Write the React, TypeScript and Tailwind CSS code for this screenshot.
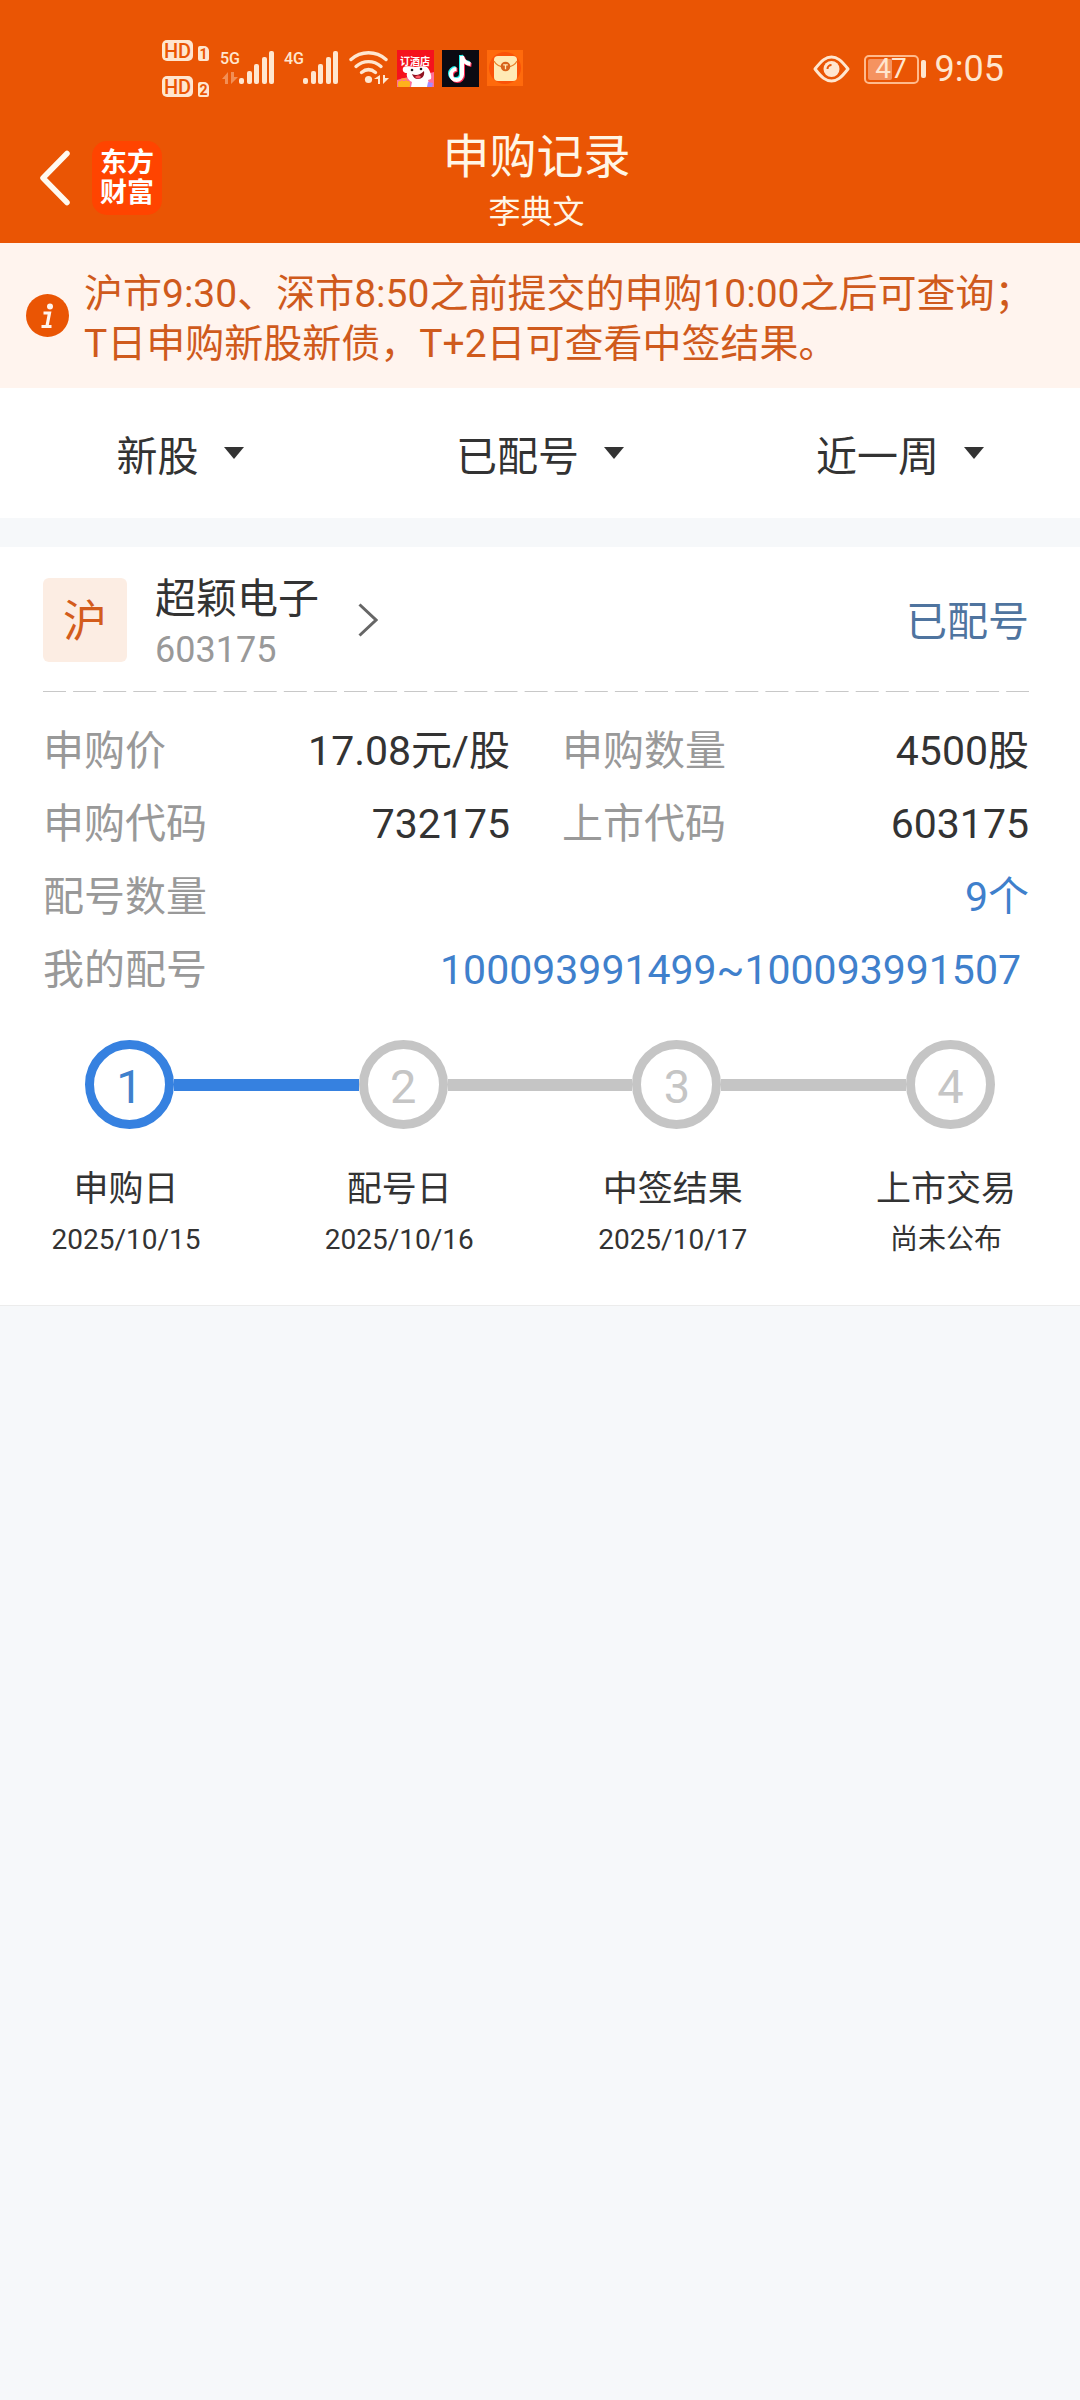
import clsx from 'clsx';
import { useState } from 'react';

type Field = {
  label: string;
  value: string;
};

const filters = [
  { id: 'kind', name: '品种', value: '新股' },
  { id: 'status', name: '状态', value: '已配号' },
  { id: 'range', name: '时间', value: '近一周' },
];

const fields: Field[] = [
  { label: '申购价', value: '17.08元/股' },
  { label: '申购数量', value: '4500股' },
  { label: '申购代码', value: '732175' },
  { label: '上市代码', value: '603175' },
];

const steps = [
  { title: '申购日', date: '2025/10/15', done: true },
  { title: '配号日', date: '2025/10/16', done: false },
  { title: '中签结果', date: '2025/10/17', done: false },
  { title: '上市交易', date: '尚未公布', done: false },
];

function SimBadge({ slot }: { slot: string }) {
  return (
    <div className="flex items-end gap-[5px]">
      <span className="flex h-[21px] w-[31px] items-center justify-center rounded-[5px] bg-[#ffe6cf] text-[20px] leading-none font-medium text-[#ea5504]">
        HD
      </span>
      <span className="flex h-[15px] w-[11px] items-center justify-center rounded-[2px] rounded-tr-[5px] bg-[#ffe6cf] text-[14px] leading-none font-bold text-[#ea5504]">
        {slot}
      </span>
    </div>
  );
}

function Signal({ label, data }: { label: string; data?: boolean }) {
  return (
    <div className="flex items-start">
      <div className="flex w-[18px] flex-col items-center gap-[5px]">
        <span className="text-[16px] leading-[16px] font-medium">{label}</span>
        {data && (
          <svg className="h-[12px] w-[16px] opacity-40" viewBox="0 0 16 12" fill="currentColor">
            <path d="M6 0v12H3V7H0z" />
            <path d="M9 0v12l7-7h-4V0z" />
          </svg>
        )}
      </div>
      <svg className="h-[33px] w-[36px]" viewBox="0 0 36 33" fill="currentColor">
        <rect x="0" y="27" width="5" height="6" rx="2" />
        <rect x="8" y="20" width="5" height="13" rx="2" />
        <rect x="15" y="13" width="5" height="20" rx="2" />
        <rect x="23" y="6" width="5" height="27" rx="2" />
        <rect x="30" y="0" width="5" height="33" rx="2" />
      </svg>
    </div>
  );
}

function WifiIcon() {
  return (
    <svg className="h-[33px] w-[40px]" viewBox="0 0 40 33" fill="none">
      <g stroke="currentColor" strokeWidth="3.400" strokeLinecap="round">
        <path d="M2 8.500C12-.500 27-.500 37 8.500" />
        <path d="M7 15.500c7.500-6.500 17.500-6.500 25 0" />
        <path d="M12.500 21.500c4.500-3.700 9.500-3.700 14 0" />
      </g>
      <circle cx="19.500" cy="28.500" r="3.600" fill="currentColor" />
      <path d="M31 24v9h-2v-5h-4zM34 24v9l6-6h-4v-3z" fill="currentColor" />
    </svg>
  );
}

function HotelAppIcon() {
  return (
    <div className="relative h-[37px] w-[37px] overflow-hidden bg-[#f5121d]">
      <svg className="h-full w-full" viewBox="0 0 37 37">
        <path d="M0 30c10-4 25-4 37-8v15H0z" fill="#ff6f9a" />
        <path d="M6 18c2-3 8-1 12-1 5 0 10-2 13 1 2 3 4 8 3 11l-3 1 2 7H14l1-5c-4-2-6-6-5-9-3 0-5-2-4-5z" fill="#fff" />
        <circle cx="15" cy="20" r="1.300" fill="#222" />
        <circle cx="24" cy="19" r="1.300" fill="#222" />
        <path d="M15 24c4 2 8 1 12-3 1 5-2 8-6 8-3 0-5-2-6-5z" fill="#8e1320" />
        <path d="M18 27c2-2 5-2 6 0-2 2-4 2-6 0z" fill="#ff5a67" />
        <rect x="1" y="31" width="12" height="6" rx="1.500" fill="#ffb21c" />
        <path d="M5 31v-2h4v2" stroke="#ffb21c" strokeWidth="1.200" fill="none" />
        <path d="M31 32l5 1-1 4h-5z" fill="#a58bff" />
      </svg>
      <span className="absolute top-[6px] left-[3px] text-[10px] leading-[11px] font-bold text-white">
        订酒店
      </span>
    </div>
  );
}

function NoteIcon() {
  const note = 'M20 6v18.500a5.500 5.500 0 1 1-5.500-5.500M20 6c.500 4.500 4 7.500 8.500 8';
  return (
    <svg className="h-[37px] w-[37px] bg-[#0b0a12]" viewBox="0 0 37 37" fill="none" strokeWidth="4">
      <g transform="translate(-1 -1)" stroke="#25f4ee">
        <path d={note} />
      </g>
      <g transform="translate(1 1)" stroke="#fe2c55">
        <path d={note} />
      </g>
      <path d={note} stroke="#fff" />
    </svg>
  );
}

function EnvelopeIcon() {
  return (
    <svg className="h-[36px] w-[36px]" viewBox="0 0 36 36">
      <rect width="36" height="36" fill="#ff6a0c" />
      <circle cx="18" cy="18" r="16" fill="#fa5208" />
      <rect x="7" y="6" width="23" height="25" rx="4" fill="#ffeab5" />
      <path d="M7 11c2 4 6 6 11.500 6S28 15 30 11" stroke="#e9822b" strokeWidth="1.200" fill="none" />
      <circle cx="18.500" cy="16.500" r="4.800" fill="#d8641c" />
      <path d="M16.200 14.800h4.600M18.500 14.800v4.400" stroke="#ffeab5" strokeWidth="1.300" />
    </svg>
  );
}

function EyeIcon() {
  return (
    <svg className="h-[28px] w-[37px]" viewBox="0 0 37 28" fill="none">
      <path
        d="M2 14C9 5 13 2 18.500 2S28 5 35 14c-7 9-11 12-16.500 12S9 23 2 14z"
        stroke="currentColor"
        strokeWidth="3"
        strokeLinejoin="round"
      />
      <circle cx="18.500" cy="14" r="8" fill="currentColor" />
      <path d="M14.500 14a4 4 0 0 1 4-4" stroke="#ea5504" strokeWidth="2" />
    </svg>
  );
}

function Battery({ level }: { level: number }) {
  return (
    <div className="flex items-center gap-[2px]">
      <div className="relative flex h-[29px] w-[55px] items-center justify-center rounded-[5px] border-2 border-[#ffba8c] p-[2px]">
        <div
          className="absolute top-[2px] bottom-[2px] left-[2px] rounded-[2px] bg-[#f59360]"
          style={{ width: `${level}%` }}
        />
        <span className="relative text-[28px] leading-none">{level}</span>
      </div>
      <div className="h-[18px] w-[5px] rounded-[2px] bg-[#ffe6cf]" />
    </div>
  );
}

function StatusBar() {
  return (
    <div className="flex h-[124px] items-start justify-between pt-10 pr-[76px] pl-[162px] text-[#ffe6cf]">
      <div className="flex items-start">
        <div className="flex flex-col gap-[15px]">
          <SimBadge slot="1" />
          <SimBadge slot="2" />
        </div>
        <div className="ml-3 flex gap-[10px] pt-[11px]">
          <Signal label="5G" data />
          <Signal label="4G" />
          <WifiIcon />
        </div>
        <div className="ml-2 flex gap-2 pt-[10px]">
          <HotelAppIcon />
          <NoteIcon />
          <EnvelopeIcon />
        </div>
      </div>
      <div className="flex items-center pt-2">
        <EyeIcon />
        <div className="ml-[14px]">
          <Battery level={47} />
        </div>
        <span className="ml-[9px] text-[36px] leading-[42px]">9:05</span>
      </div>
    </div>
  );
}

function Header() {
  return (
    <header className="bg-[#ea5504]">
      <StatusBar />
      <div className="grid h-[119px] grid-cols-[1fr_auto_1fr] items-start">
        <div className="flex items-center gap-[22px] pt-[17px] pl-[38px]">
          <button type="button" aria-label="返回">
            <svg className="h-[56px] w-[32px]" viewBox="0 0 32 56" fill="none">
              <path d="M29 3.500L5 28l24 24.500" stroke="#fffaf0" strokeWidth="5.500" strokeLinecap="round" strokeLinejoin="round" />
            </svg>
          </button>
          <div className="flex h-[74px] w-[70px] items-center justify-center rounded-[15px] bg-[#ff4400] text-center text-[27px] leading-[30px] font-bold text-white">
            东方
            <br />
            财富
          </div>
        </div>
        <div className="pr-[7px] text-center text-[#fff6e6]">
          <h1 className="text-[47px] leading-[66px]">申购记录</h1>
          <p className="text-[32px] leading-[44px]">李典文</p>
        </div>
      </div>
    </header>
  );
}

function Notice() {
  return (
    <div className="flex items-center gap-[15px] bg-[#fff4ee] px-[26px] pt-[18px] pb-[19px]">
      <svg className="h-[43px] w-[43px] shrink-0" viewBox="0 0 43 43">
        <circle cx="21.500" cy="21.500" r="21.500" fill="#ea5504" />
        <circle cx="24" cy="12.500" r="3" fill="#fff4ee" />
        <path d="M17.500 19h6l-2.500 13M15.500 32.500h10" stroke="#fff4ee" strokeWidth="3.200" fill="none" />
      </svg>
      <p className="pt-2 text-[39px] leading-[50px] text-[#cf5a1c]">
        沪市9:30、深市8:50之前提交的申购10:00之后可查询；
        <br />
        T日申购新股新债，T+2日可查看中签结果。
      </p>
    </div>
  );
}

function Filters() {
  return (
    <div className="grid h-[130px] grid-cols-3 items-center justify-items-center bg-white">
      {filters.map((filter) => (
        <div key={filter.id} className="relative flex items-center">
          <select
            id={filter.id}
            aria-label={filter.name}
            className="h-[76px] appearance-none pt-2 pr-[45px] text-[41px] leading-[68px] outline-none"
          >
            <option>{filter.value}</option>
          </select>
          <svg className="pointer-events-none absolute right-0 h-[12px] w-[20px]" viewBox="0 0 20 12">
            <path d="M0 0h20L10 12z" fill="#333" />
          </svg>
        </div>
      ))}
    </div>
  );
}

function FieldRow({ label, value }: Field) {
  return (
    <div className="flex justify-between">
      <dt className="text-[#999]">{label}</dt>
      <dd>{value}</dd>
    </div>
  );
}

function Stepper() {
  return (
    <div className="pt-[33px]">
      <div className="flex items-center pr-[34px] pl-[42px]">
        {steps.map((step, i) => (
          <div key={step.title} className={clsx('flex items-center', i > 0 && 'flex-1')}>
            {i > 0 && (
              <div className={clsx('h-3 flex-1', steps[i - 1].done ? 'bg-[#3681e0]' : 'bg-[#c5c5c5]')} />
            )}
            <div
              className={clsx(
                'flex h-[89px] w-[89px] items-center justify-center rounded-full border-[9px] pt-1 text-[47px] leading-none',
                step.done ? 'border-[#3681e0] text-[#3f80cc]' : 'border-[#c5c5c5] text-[#c5c5c5]'
              )}
            >
              {i + 1}
            </div>
          </div>
        ))}
      </div>
      <ol className="flex justify-between pt-[34px]">
        {steps.map((step) => (
          <li key={step.title} className="w-[166px] text-center">
            <p className="text-[35px] leading-[54px]">{step.title}</p>
            <p className="text-[28px] leading-[46px]">{step.date}</p>
          </li>
        ))}
      </ol>
    </div>
  );
}

function RecordCard() {
  const [numbers] = useState('100093991499~100093991507');

  return (
    <section className="border-b border-[#ececec] bg-white pt-[29px] pr-[51px] pb-[42px] pl-[43px]">
      <div className="flex items-center justify-between">
        <a href="#603175" className="flex items-center">
          <span className="flex h-[84px] w-[84px] items-center justify-center rounded-md bg-[#fcede3] pt-1 text-[44px] leading-none text-[#d35c1c]">
            沪
          </span>
          <span className="ml-7 flex h-[88px] flex-col justify-between pt-[2px]">
            <span className="text-[41px] leading-[42px]">超颖电子</span>
            <span className="text-[36px] leading-[28px] text-[#999]">603175</span>
          </span>
          <svg className="ml-[39px] h-[34px] w-[20px]" viewBox="0 0 20 34" fill="none">
            <path d="M1.500 1.500L18 17 1.500 32.500" stroke="#666" strokeWidth="3" />
          </svg>
        </a>
        <span className="pt-1 text-[41px] leading-[60px] text-[#4f749f]">已配号</span>
      </div>

      <svg className="mt-[27px] block h-px w-full">
        <line x1="0" x2="100%" y1="0.5" y2="0.5" stroke="#c8c8c8" strokeDasharray="23 7.1" />
      </svg>

      <dl className="pt-[23px] text-[41px] leading-[73px]">
        <div className="grid grid-cols-2 gap-x-[52px]">
          {fields.map((field) => (
            <FieldRow key={field.label} {...field} />
          ))}
        </div>
        <div className="flex justify-between">
          <dt className="text-[#999]">配号数量</dt>
          <dd className="text-[#3f80cc]">9个</dd>
        </div>
        <div className="flex justify-between">
          <dt className="text-[#999]">我的配号</dt>
          <dd className="pr-2 text-[#3f80cc]">{numbers}</dd>
        </div>
      </dl>

      <Stepper />
    </section>
  );
}

export default function App() {
  return (
    <div className="min-h-screen bg-[#f6f8fa] font-[Roboto,'Noto_Sans_CJK_SC',sans-serif] text-[#333]">
      <Header />
      <main>
        <Notice />
        <Filters />
        <div className="h-[29px]" />
        <RecordCard />
      </main>
    </div>
  );
}
